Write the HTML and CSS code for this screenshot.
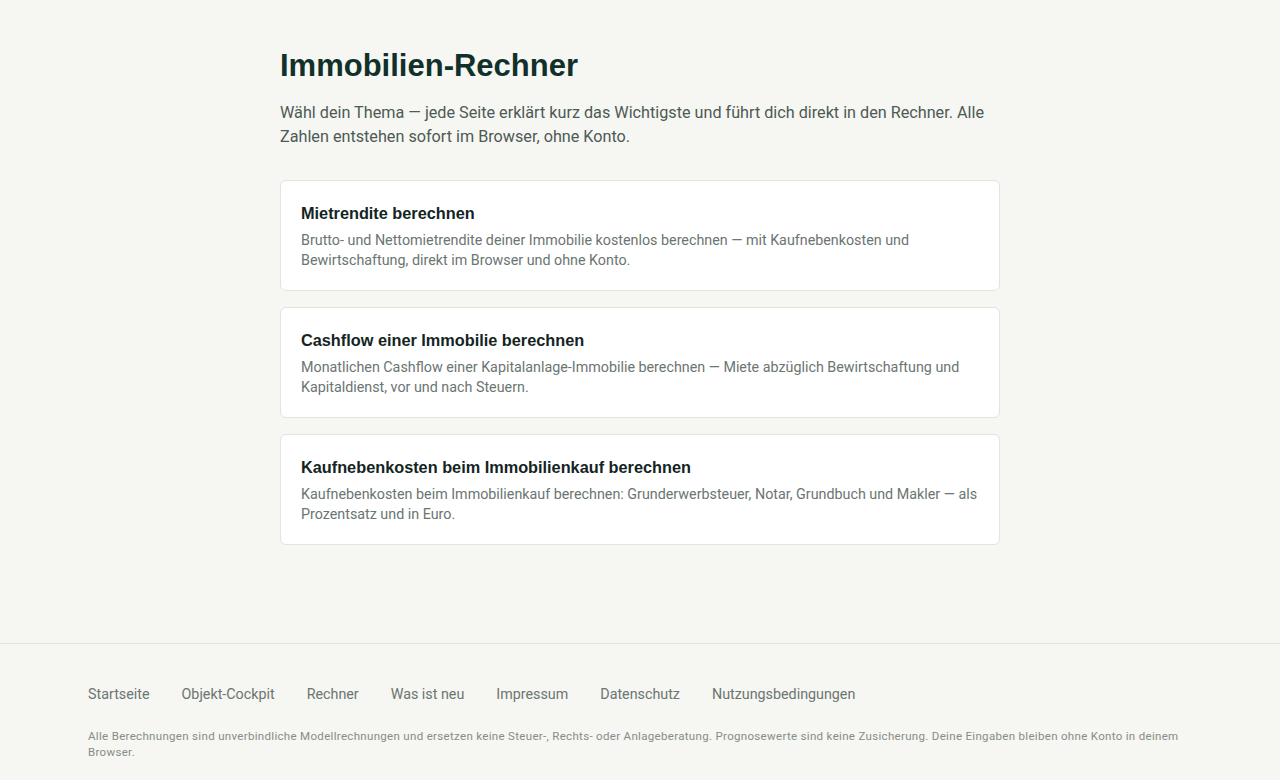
FILE: index.html
```html
<!DOCTYPE html>
<html lang="de">
<head>
    <meta charset="UTF-8">
    <meta name="viewport" content="width=device-width, initial-scale=1.0">
    <title>Immobilien-Rechner</title>
    <link rel="stylesheet" href="styles.css">
</head>
<body>
    <main class="page">
        <h1>Immobilien-Rechner</h1>
        <p class="lead">Wähl dein Thema — jede Seite erklärt kurz das Wichtigste und führt dich direkt in den Rechner. Alle Zahlen entstehen sofort im Browser, ohne Konto.</p>

        <div class="cards">
            <a class="card" href="#">
                <h2>Mietrendite berechnen</h2>
                <p>Brutto- und Nettomietrendite deiner Immobilie kostenlos berechnen — mit Kaufnebenkosten und Bewirtschaftung, direkt im Browser und ohne Konto.</p>
            </a>
            <a class="card" href="#">
                <h2>Cashflow einer Immobilie berechnen</h2>
                <p>Monatlichen Cashflow einer Kapitalanlage-Immobilie berechnen — Miete abzüglich Bewirtschaftung und Kapitaldienst, vor und nach Steuern.</p>
            </a>
            <a class="card" href="#">
                <h2>Kaufnebenkosten beim Immobilienkauf berechnen</h2>
                <p>Kaufnebenkosten beim Immobilienkauf berechnen: Grunderwerbsteuer, Notar, Grundbuch und Makler — als Prozentsatz und in Euro.</p>
            </a>
        </div>
    </main>

    <footer class="footer">
        <div class="footer-inner">
            <nav class="footer-links">
                <a href="#">Startseite</a>
                <a href="#">Objekt-Cockpit</a>
                <a href="#">Rechner</a>
                <a href="#">Was ist neu</a>
                <a href="#">Impressum</a>
                <a href="#">Datenschutz</a>
                <a href="#">Nutzungsbedingungen</a>
            </nav>
            <p class="disclaimer">Alle Berechnungen sind unverbindliche Modellrechnungen und ersetzen keine Steuer-, Rechts- oder Anlageberatung. Prognosewerte sind keine Zusicherung. Deine Eingaben bleiben ohne Konto in deinem Browser.</p>
        </div>
    </footer>
</body>
</html>
```

FILE: styles.css
```css
body {
    margin: 0;
    background-color: #f6f6f2;
    font-family: "Roboto", "Liberation Sans", sans-serif;
    color: #4d5a55;
}
.page {
    max-width: 720px;
    margin: 0 auto;
    padding: 44px 0 98px;
}
h1 {
    margin: 0 0 13px;
    font-family: "Liberation Sans", Arial, sans-serif;
    font-size: 31px;
    font-weight: bold;
    line-height: 44px;
    color: #12302a;
}
.lead {
    margin: 0 0 31px;
    font-size: 16.2px;
    line-height: 24px;
    color: #4d5a55;
}
.cards {
    display: flex;
    flex-direction: column;
    gap: 16px;
}
.card {
    display: block;
    background: #fff;
    border: 1px solid #e4e4de;
    border-radius: 6px;
    padding: 21px 20px 20px;
    text-decoration: none;
}
.card h2 {
    margin: 0 0 6px;
    font-family: "Liberation Sans", Arial, sans-serif;
    font-size: 16.3px;
    font-weight: bold;
    line-height: 22px;
    color: #14241f;
}
.card p {
    margin: 0;
    font-size: 14.3px;
    line-height: 20px;
    color: #6b7571;
}
.footer {
    border-top: 1px solid #e2e2dc;
}
.footer-inner {
    max-width: 1104px;
    margin: 0 auto;
    padding: 40px 0 20px;
}
.footer-links {
    display: flex;
    gap: 32px;
    margin-bottom: 24px;
}
.footer-links a {
    font-size: 14.3px;
    line-height: 20px;
    color: #6b7571;
    text-decoration: none;
}
.disclaimer {
    margin: 0;
    font-size: 11.5px;
    line-height: 16px;
    letter-spacing: 0.32px;
    color: #858d89;
}
```
